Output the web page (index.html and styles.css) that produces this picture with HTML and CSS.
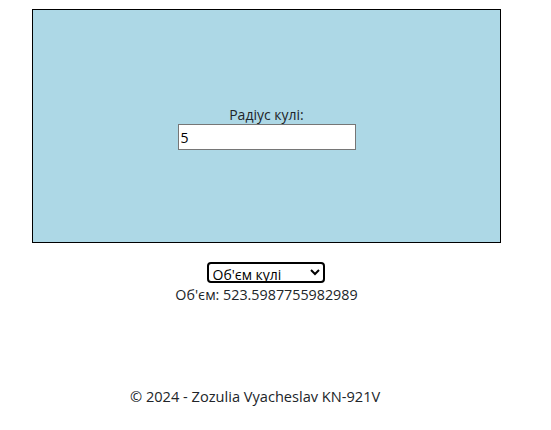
FILE: index.html
```html
<!DOCTYPE html>
<html lang="uk">
<head>
<meta charset="utf-8">
<link rel="stylesheet" href="styles.css">
</head>
<body>
<div class="page">
  <div class="panel">
    <label class="label" for="r">Радіус кулі:</label>
    <input id="r" class="field" type="text" value="5">
  </div>
  <div class="calc">
    <select class="choice">
      <option>Об'єм кулі</option>
    </select>
    <div class="result">Об'єм: 523.5987755982989</div>
  </div>
  <footer class="footer">© 2024 - Zozulia Vyacheslav KN-921V</footer>
</div>
</body>
</html>
```
FILE: styles.css
```css
html, body {
  margin: 0;
  background: #fff;
}
body {
  font-family: "Open Sans", "Noto Sans", sans-serif;
  font-size: 14px;
  color: #212529;
}
.page {
  width: 533px;
}
.panel {
  margin: 9px 32px 0;
  height: 232px;
  background: #add8e6;
  border: 1px solid #000;
  display: flex;
  flex-direction: column;
  align-items: center;
  justify-content: center;
}
.label {
  line-height: 18px;
  margin-top: 4px;
}
.field {
  box-sizing: border-box;
  width: 178px;
  height: 26px;
  border: 1px solid #767676;
  padding: 0 2px;
  font-family: inherit;
  font-size: 14px;
  color: #000;
}
.calc {
  margin-top: 19px;
  display: flex;
  flex-direction: column;
  align-items: center;
}
.choice {
  box-sizing: border-box;
  width: 118px;
  height: 21px;
  margin-right: 2px;
  border: 2px solid #000;
  border-radius: 4px;
  font-family: inherit;
  font-size: 14px;
  color: #000;
  background: #fff;
  padding: 0;
}
.result {
  line-height: 19px;
  margin-top: 2px;
  font-size: 14.3px;
}
.footer {
  margin-top: 83px;
  padding-left: 130px;
  line-height: 19px;
  font-size: 14.6px;
}
```
